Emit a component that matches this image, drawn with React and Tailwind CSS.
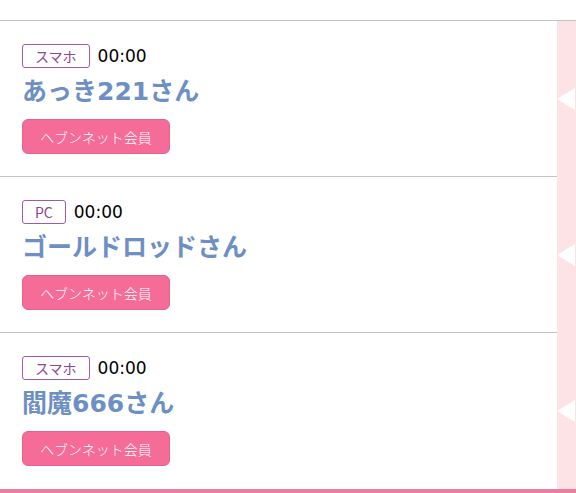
const users = [
  { device: 'スマホ', time: '00:00', name: 'あっき221さん' },
  { device: 'PC', time: '00:00', name: 'ゴールドロッドさん' },
  { device: 'スマホ', time: '00:00', name: '閻魔666さん' },
]

export default function App() {
  return (
    <div className="w-[576px] h-[493px] overflow-hidden bg-white font-['DejaVu_Sans','Noto_Sans_CJK_JP',sans-serif]">
      {/* top gap */}
      <div className="h-[21px] border-b border-[#c4c4c4]" />

      {users.map((u, i) => (
        <div key={i} className="flex">
          <div
            className={`flex-1 pl-[22px] pt-[23px] pb-[22px] ${
              i < users.length - 1 ? 'border-b border-[#c4c4c4]' : 'pb-[23px]'
            }`}
          >
            <div className="flex items-center gap-[8px] h-[24px]">
              <span className="h-[24px] px-[12px] flex items-center border border-[#a258a8] rounded-[3px] text-[14px] leading-none text-[#8e4594] font-['Noto_Sans_CJK_JP',sans-serif]">
                {u.device}
              </span>
              <span className="text-[17px] leading-none text-black">{u.time}</span>
            </div>
            <div className="mt-[6px] h-[34px] flex items-center text-[25px] leading-none font-semibold text-[#6d8fc3]">
              {u.name}
            </div>
            <button className="mt-[11px] h-[35px] w-[148px] rounded-[6px] bg-[#f56c98] border border-[#e4628c] text-[14px] text-white leading-none font-['Noto_Sans_CJK_JP',sans-serif] font-light">
              ヘブンネット会員
            </button>
          </div>
          <div className="w-[19px] bg-[#fde3e6] flex items-center">
            <div className="w-0 h-0 border-y-[11px] border-y-transparent border-r-[18px] border-r-white" />
          </div>
        </div>
      ))}

      {/* bottom pink line */}
      <div className="h-[4px] bg-[#e77fa3]" />
    </div>
  )
}
